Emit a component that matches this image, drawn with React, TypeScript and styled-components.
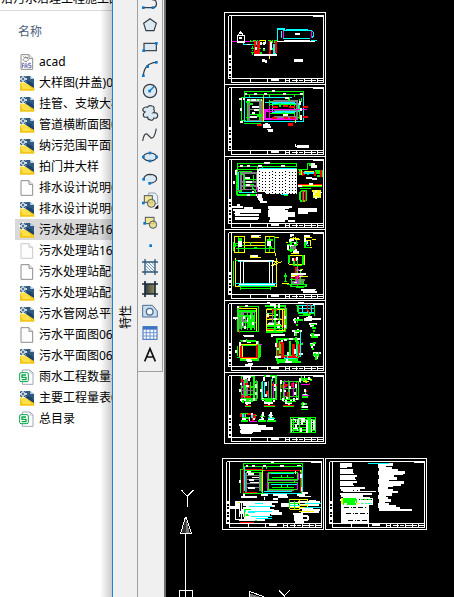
import React from "react";
import styled, { createGlobalStyle } from "styled-components";

const GlobalStyle = createGlobalStyle`
  * { box-sizing: border-box; }
  body {
    margin: 0;
    background: #000;
    font-family: "Noto Sans", "Noto Sans CJK SC", sans-serif;
    font-size: 12px;
    color: #000;
  }
`;

const Desktop = styled.div`
  display: flex;
  height: 100vh;
  overflow: hidden;
`;

const Explorer = styled.section`
  position: relative;
  flex: 0 0 112px;
  overflow: hidden;
  background: #fff;
  white-space: nowrap;
  &::after {
    content: "";
    position: absolute;
    inset: 0 0 0 auto;
    width: 12px;
    background: linear-gradient(to right, rgba(0, 0, 0, 0), rgba(0, 0, 0, 0.2));
  }
`;

const AddressBar = styled.header`
  display: flex;
  align-items: flex-end;
  height: 11px;
  padding: 0 0 3px 1px;
  line-height: 16px;
  border-bottom: 1px solid #d9d9d9;
`;

const ColumnHeader = styled.div`
  height: 40px;
  padding: 0 18px;
  line-height: 42px;
  color: #4c607a;
`;

const FileList = styled.ul`
  margin: 0;
  padding: 0 0 0 15px;
  list-style: none;
`;

const FileRow = styled.li<{ $selected?: boolean }>`
  display: flex;
  align-items: center;
  gap: 4px;
  height: 21px;
  padding-left: 4px;
  line-height: 21px;
  background: ${(p) => (p.$selected ? "#d9d9d9" : "transparent")};
`;

const FileIcon = styled.svg`
  flex: 0 0 16px;
  width: 16px;
  height: 16px;
`;

const Palette = styled.aside`
  flex: 0 0 26px;
  padding: 305px 0 0 5px;
  background: #f0f0f0;
  border-left: 1px solid #1883d7;
  border-right: 1px solid #a0a0a0;
`;

const PaletteTitle = styled.div`
  width: 16px;
  line-height: 16px;
  writing-mode: vertical-rl;
  text-orientation: sideways;
  transform: rotate(180deg);
`;

const ToolDock = styled.div`
  flex: 0 0 28px;
  background: #f0f0f0;
  border-right: 2px solid #6e6e6e;
`;

const ToolBar = styled.div`
  display: flex;
  flex-direction: column;
  width: 25px;
  margin-top: -8px;
  padding-bottom: 5px;
  border-right: 1px solid #a0a0a0;
  border-bottom: 1px solid #a0a0a0;
`;

const ToolButton = styled.button`
  display: grid;
  place-items: center;
  height: 22px;
  padding: 0;
  border: 0;
  background: transparent;
  svg {
    width: 18px;
    height: 18px;
  }
`;

const ModelSpace = styled.main`
  flex: 1;
  min-width: 0;
  background: #000;
  overflow: hidden;
  svg {
    display: block;
  }
`;

type FileKind = "fas" | "dwg" | "blank" | "faded" | "sheet";

const files: { name: string; kind: FileKind; selected?: boolean }[] = [
  { name: "acad", kind: "fas" },
  { name: "大样图(井盖)06", kind: "dwg" },
  { name: "挂管、支墩大样", kind: "dwg" },
  { name: "管道横断面图06", kind: "dwg" },
  { name: "纳污范围平面图", kind: "dwg" },
  { name: "拍门井大样", kind: "dwg" },
  { name: "排水设计说明06", kind: "blank" },
  { name: "排水设计说明06", kind: "dwg" },
  { name: "污水处理站16", kind: "dwg", selected: true },
  { name: "污水处理站16", kind: "faded" },
  { name: "污水处理站配筋", kind: "blank" },
  { name: "污水处理站配筋", kind: "dwg" },
  { name: "污水管网总平面", kind: "dwg" },
  { name: "污水平面图06", kind: "blank" },
  { name: "污水平面图06", kind: "dwg" },
  { name: "雨水工程数量表", kind: "sheet" },
  { name: "主要工程量表06", kind: "dwg" },
  { name: "总目录", kind: "sheet" },
];

function FileGlyph({ kind }: { kind: FileKind }) {
  if (kind === "dwg")
    return (
      <FileIcon viewBox="0 0 48 48">
        <path d="M20 3H33L45 12V38L28 30L16 20Z" fill="#315a82" />
        <path d="M34 3V12H45Z" fill="#c3d2e0" />
        <path d="M20 19Q36 16 45 32V42L34 34Z" fill="#1d4468" />
        <path d="M3 24L12 21L26 28L40 36L46 40V47H3Z" fill="#f3c61a" />
        <path d="M3 24L12 21L27 29L38 42H12Z" fill="#ffe04a" />
        <path d="M3 3H21V21H3Z" fill="#315a82" />
        <path d="M12 0V24M0 12H24" stroke="#fff" strokeWidth="4" />
        <path d="M4 4L20 20M20 4L4 20" stroke="#dfe8f0" strokeWidth="2" />
        <path d="M12 9V15M9 12H15" stroke="#284f74" strokeWidth="3" />
      </FileIcon>
    );
  if (kind === "sheet")
    return (
      <FileIcon viewBox="0 0 48 48">
        <path d="M10 3H33L42 12V46H10Z" fill="#fff" stroke="#a0a6b8" strokeWidth="3" />
        <path d="M33 3V12H42" fill="none" stroke="#a0a6b8" strokeWidth="2" />
        <rect x="2" y="11" width="26" height="27" rx="4" fill="#fff" stroke="#0aa54b" strokeWidth="3" />
        <path d="M21 18H9V25H21V32H8" fill="none" stroke="#0aa54b" strokeWidth="4" />
      </FileIcon>
    );
  const line = kind === "faded" ? "#c9c9c9" : "#8d8d8d";
  return (
    <FileIcon viewBox="0 0 48 48">
      <path d="M6 2H30L41 13V46H6Z" fill="#fdfdfd" stroke={line} strokeWidth="3" />
      <path d="M30 2V13H41" fill="#eee" stroke={line} strokeWidth="3" />
      {kind === "fas" && (
        <g fill="none" stroke="#5558a6" strokeWidth="2.5">
          <path d="M10 42V28H16M10 35H15M18 42V32L21 28L24 32V42M18 36H24M36 28H29V34H36V41H28" />
          <path d="M12 17L17 11H24L29 17L24 22H17ZM20 7V11M13 7L17 11M27 9L23 12" stroke="#777" />
        </g>
      )}
    </FileIcon>
  );
}

const dot = (x: number, y: number) => <rect key={x + "-" + y} x={x - 4} y={y - 4} width="8" height="8" fill="#0878d0" />;
const ink = { stroke: "#343b42", strokeWidth: 3.5, fill: "#dce9f3" };

const tools: { label: string; art: React.ReactNode }[] = [
  { label: "Polyline", art: <><path d="M8 41H38Q48 38 46 26Q44 16 34 18" {...ink} fill="none" />{dot(7, 41)}{dot(36, 41)}</> },
  { label: "Polygon", art: <path d="M27 8L46 22L39 44H15L8 22Z" {...ink} /> },
  { label: "Rectangle", art: <><rect x="9" y="16" width="37" height="22" {...ink} />{dot(8, 38)}{dot(46, 16)}</> },
  { label: "Arc", art: <><path d="M7 47Q10 9 46 7" {...ink} fill="none" />{dot(7, 47)}{dot(20, 20)}{dot(46, 7)}</> },
  { label: "Circle", art: <><circle cx="27" cy="27" r="20" {...ink} /><path d="M26 27L40 13" stroke="#0878d0" strokeWidth="4" />{dot(26, 27)}</> },
  { label: "Revision cloud", art: <path d="M12 24Q2 21 7 13Q12 7 19 10Q24 2 33 6Q42 8 38 17Q43 22 37 26Q51 25 50 36Q48 45 39 42Q35 52 26 47Q19 46 20 39Q6 42 7 32Q7 27 12 24Z" {...ink} /> },
  { label: "Spline", art: <path d="M5 45Q9 20 18 24L30 36Q40 40 46 8" {...ink} fill="none" /> },
  { label: "Ellipse", art: <><ellipse cx="27" cy="27" rx="20" ry="12" {...ink} />{dot(7, 27)}{dot(27, 15)}{dot(47, 27)}{dot(27, 39)}</> },
  { label: "Ellipse arc", art: <><path d="M8 28Q10 13 28 13Q47 14 47 27Q46 37 26 40" {...ink} />{dot(8, 28)}{dot(26, 40)}</> },
  { label: "Insert block", art: <><path d="M23 3H42L50 12V35H23Z" fill="#e8f0f6" stroke="#95a2ad" strokeWidth="3" /><rect x="10" y="11" width="24" height="20" fill="#f1e795" stroke="#4d5660" strokeWidth="3" /><circle cx="31" cy="34" r="12" fill="#e9dc7ccc" stroke="#4d5660" strokeWidth="3" /><path d="M52 38V50H40Z" />{dot(7, 33)}</> },
  { label: "Make block", art: <><rect x="13" y="10" width="26" height="19" fill="#f1e795" stroke="#4d5660" strokeWidth="3" /><circle cx="36" cy="32" r="11" fill="#e9dc7ccc" stroke="#4d5660" strokeWidth="3" />{dot(11, 28)}</> },
  { label: "Point", art: dot(29, 29) },
  { label: "Hatch", art: <><rect x="12" y="12" width="30" height="30" fill="#eef5fb" /><path d="M12 21L33 42M12 12L42 42M21 12L42 33M31 12L42 23M12 31L23 42" stroke="#456e98" strokeWidth="2" /><path d="M12 3V51M42 3V51M3 12H51M3 42H51" stroke="#315777" strokeWidth="4" /></> },
  { label: "Gradient", art: <><defs><linearGradient id="swatch"><stop stopColor="#2f3b4a" /><stop offset="1" stopColor="#948f4f" /></linearGradient></defs><rect x="12" y="12" width="30" height="30" fill="url(#swatch)" /><path d="M12 3V51M42 3V51M3 12H51M3 42H51" stroke="#1d2b3a" strokeWidth="5" /></> },
  { label: "Region", art: <><path d="M5 10H34L49 27V45H5Z" fill="#c9ddec" stroke="#4b6e95" strokeWidth="3" /><circle cx="26" cy="29" r="10" fill="#f7fafc" stroke="#4b6e95" strokeWidth="4" /></> },
  { label: "Table", art: <><rect x="6" y="8" width="42" height="38" fill="#f4f8ff" stroke="#3569b6" strokeWidth="3" /><rect x="6" y="8" width="42" height="9" fill="#3e72c4" /><path d="M16 17V46M27 17V46M38 17V46M6 26H48M6 36H48" stroke="#7096cc" strokeWidth="3" /></> },
  { label: "Text", art: <path d="M11 46L27 8L43 46M17 33H37" fill="none" stroke="#111" strokeWidth="5" /> },
];

/* Drawing colours: white, green, cyan, magenta, red, yellow, grey. */
const palette = { w: "#fff", g: "#0f0", c: "#0ff", m: "#f0f", r: "#f00", y: "#ff0", k: "#808080" };
type Ink = keyof typeof palette;
/* A stroke: colour, path, and optionally its width and dash pattern. */
type Stroke = [Ink, string, number?, string?];
const speckle = "9 3 15 3 6 6 3 3";

function Strokes({ list }: { list: Stroke[] }) {
  return (
    <>
      {list.map(([color, d, width = 3, dash], i) => (
        <path key={i} d={d} fill="none" stroke={palette[color]} strokeWidth={width} strokeDasharray={dash} />
      ))}
    </>
  );
}

/* Border, binding strip and title block of a sheet of the given height. */
const frame = (h: number): Stroke[] => {
  const head = h - 18;
  const foot = h - 6;
  return [
    ["w", `M28.5 0H331.5V${h}H28.5ZM49.5 9H325.5V${foot}H49.5ZM49.5 ${head}H325.5M40.5 9V${head}M40.5 9H49.5M40.5 ${head}H49.5`],
    ["w", "M294 10.5H325.5", 6],
    ["w", `M45 126V${head}`, 6, "9 6 3 6"],
    ["w", [106.5, 157.5, 211.5, 223.5, 244.5, 268.5, 289.5, 307.5].map((x) => `M${x} ${head}V${foot}`).join("")],
    ["w", `M168 ${head + 4.5}H192`, 6],
    ["w", `M213 ${head + 6}H325.5`, 3, "12 6 18 3"],
  ];
};

interface Sheet {
  x: number;
  y: number;
  top: number;
  height: number;
  left?: number;
  art: Stroke[];
}

const sheets: Sheet[] = [
  {
    x: 215, y: 0, top: 37.5, height: 216,
    art: [
      ["m", "M51 124H118M206 94V114M290 94V114"],
      ["w", "M68 125V105H88V125ZM71 104L77 94L84 104M72 100H83M74 96H80"],
      ["w", "M72 114H82", 6], ["w", "M66 126H90"],
      ["c", "M84 128V133H124V124M187 124V86H209V91M186 87H210M213 88H279M205 91H289M205 115H285M201 94Q197 103 201 113M293 94Q297 103 293 113M289 121H305M176 164V133H186"],
      ["c", "M205 91H290M206 115H286", 4],
      ["c", "M179 134V163", 6],
      ["w", "M187 124H300M206 120H285M96 132H106"], ["w", "M240 102H255", 6],
      ["w", "M118 164H185", 6],
      ["r", "M120 122V162M131 122V162", 8], ["r", "M118 156H135", 9], ["r", "M165 124V163", 6], ["r", "M182 124V160M128 126H134", 5],
      ["g", "M107 119V124H116M115 122H140M160 122H186M110 134H117M109 145H117M109 157H117M113 138V164M165 126H182", 4, "8 4 3 3"],
      ["g", "M137 130H155M133 145H140M144 150H152M168 147H174M134 159H142", 4, "6 4"],
      ["y", "M134 122H152M163 168V176M170 124V130", 3],
      ["w", "M138 127V135M146 126V134M151 124V132M143 145H149M168 127V150M122 141V149", 5],
      ["w", "M141 181H149M150 184H155M237 181H264", 8],
    ],
  },
  {
    x: 215, y: 80, top: 13.5, height: 216,
    art: [
      ["g", "M88 35H266V125H88ZM88 43H266M88 50V35M104 50V43M146 50V43M162 50V43M238 50V43M80 52V122M80 52H92M80 122H92M88 130H139M164 63H238V117H164ZM162 74H250M162 87H240M162 101H240M238 113H262"],
      ["c", "M88 56V124H266V52M90 52H230M150 67H240M172 69H250V94H172ZM172 96H240"],
      ["k", "M101 63H140V121H101ZM135 63V121M101 88H140M101 103H140M173 63H246V116H173M178 90H245M178 110H245", 5],
      ["g", "M98 60V122M104 60H140M104 72H115M104 104H140M92 66H104M92 112H104M126 108H140M134 88V121M164 60V120M222 50V64M260 55V65M195 70V81M207 97V108M226 70V85M254 58V118", 4],
      ["m", "M148 88H238M148 117H242M149 88V115M155 87V94H180M243 88H276M173 112V121M163 78V114", 5],
      ["y", "M145 50V125M241 119V129"],
      ["r", "M171 81H190M205 78H220M223 81H240M171 114H186M207 114H219M224 114H240M264 81H279M264 111H279M218 133H233M126 134H140", 7],
      ["w", "M171 33H183M89 42H97M117 42H126M148 42H158M203 42H212M254 42H263M77 84V93M73 57H90M74 125H84M97 59H142", 6, speckle],
      ["w", "M112 80H131M117 89H133M112 99H119M105 110H125M203 105H219M211 54H223M256 64V74M258 83V94M258 106V120", 6],
      ["w", "M145 135H165M145 141H167M155 148H173M160 153H174M149 130H158", 5],
      ["w", "M242 192V199H282M247 197H281M246 203H281", 4],
    ],
  },
  {
    x: 215, y: 150, top: 19.5, height: 219,
    art: [
      ["g", "M67 40H245V50H67ZM67 50V136H128M64 58H128M64 132H126M67 40V134M128 50V58M141 50V58M180 54H190M200 54H245M208 137H218M249 59H277V40H288M254 115H288M256 122V153"],
      ["c", "M70 66V120M73 126H122M71 119L77 130M131 56H242M197 132H218"],
      ["k", "M77 69H124V118H77ZM86 69V118M77 95H124M77 108H124", 5],
      ["g", "M66 60V134M73 64H112M76 70L89 78V88H125M86 104H117M116 74V96M88 88V117M111 110L124 128M65 123H80", 4],
      ["w", "M126 94H246", 73],
      ["w", "M90 84H106M93 95H112M93 105H104M110 126H116M95 134H104M56 93V101M64 61V74M124 134H142M126 142H142M132 150H144M136 157H155M129 148H145", 6],
      ["w", "M148 40H164M74 47H84M95 47H104M129 47H140M198 47H210", 6],
      ["m", "M128 112V138M66 122H72", 3],
      ["g", "M254 69H321M254 61V76M300 62H321V77H306M285 40V47M280 63V75", 6],
      ["r", "M249 68H262M263 63V78M300 66V79M318 59V80M258 72H270", 4],
      ["c", "M267 68H298", 8], ["y", "M270 64H296M258 60V74"],
      ["w", "M288 43H300M288 49H307M292 86H306M274 84H290", 7],
      ["r", "M249 104H321"], ["g", "M249 109H321"], ["y", "M249 107H321"], ["w", "M249 107H262M281 103H294", 6],
      ["g", "M257 123H275M256 153H274M255 125V151M274 122V152", 4], ["r", "M262 122V155M271 122V155", 4], ["k", "M266 123V151", 4],
      ["y", "M296 124H314V140H297ZM296 133H317", 7], ["w", "M304 119V129M304 138V146", 6], ["c", "M313 140V145", 5],
      ["w", "M294 131H300M318 125V130", 5],
      ["w", "M66 165H75M52 172H84M55 179H138M59 186H138M59 196H132M59 204H132M59 207H128", 6],
      ["w", "M86 174H113M56 190H75", 4],
      ["w", "M159 170H230M162 178H211M159 184H220M163 190H239M159 197H239M164 205H218M161 212H211", 7],
      ["w", "M158 174H222M160 192H240M218 213H240", 4],
      ["w", "M249 177H306M249 183H307M250 188H278", 5],
    ],
  },
  {
    x: 215, y: 225, top: 13.5, height: 213,
    art: [
      ["y", "M57 34H87V82H57ZM150 34H179V82H150ZM84 52H153M84 60H153M176 36H191M182 84V92M62 100V184H183V99M154 110H189M168 123L200 110M179 118L184 105M183 150V158"],
      ["g", "M56 50V78M150 48V80M62 70H180M54 55H76M61 60H90M70 35V82M162 35V80M105 52V60M117 67H125M61 107H76V183H180M54 107V182M76 190H167M76 186V196M166 185V196M177 34V78"],
      ["w", "M76 45V65M163 47V64", 12], ["g", "M68 43H82M157 45H174M60 56V66M164 66H172", 7],
      ["w", "M108 33H131M107 93H130M113 31H139M69 107H86M160 107H177", 5],
      ["y", "M109 38H139M106 97H138"], ["y", "M108 30V34M105 91V95"],
      ["c", "M70 109H174M60 176H185M68 181H181"], ["w", "M77 109V176M85 109V178M163 109V178M173 109V178M72 179H179", 4],
      ["w", "M83 108H161M228 28V36M225 30H237M267 32H285", 5],
      ["y", "M225 39H253M239 43H256M236 37V44M240 37V44M213 53H219M268 38H291M290 42H302M271 45V68H291M271 46H285V64M221 76H240M239 59H249M221 90H267V117H222ZM229 85H251M256 133H264"],
      ["g", "M223 52H249M221 91V115M228 45V82M239 53V63M219 75H247M217 60H225M269 47V69M270 67H286M264 90V119M237 121H261M237 100V122M211 144V171M207 169H216M207 152H216M244 45V62", 5],
      ["w", "M225 42V50M219 61V76M225 62H237M239 50V57M233 82H251M235 98V109M246 95V109M238 98V108M271 40V50M277 47V58M229 45H238M236 75H246", 6],
      ["r", "M239 62V76M243 125V180M250 151L256 162M228 154H239M231 145V166M240 99V109", 4],
      ["k", "M228 67H244M239 165H270M232 173H267", 8], ["c", "M273 49V59M275 61H283"],
      ["m", "M248 125V182M244 135H252M244 150H263M244 158H251", 4], ["g", "M248 104V126M248 129V154M229 178H273V184H227ZM224 184H265M229 160V185M257 133V178M216 178H232", 4],
      ["w", "M228 147H273M227 155H240M253 155H267M253 136H262M260 149H273M237 172H245", 4], ["y", "M228 150H246M257 153H279M200 176H221M271 154V157"],
      ["g", "M242 187H266M225 164H242M265 168V180"], ["w", "M261 195H301M263 200H306M261 191V198M263 193H303", 5],
    ],
  },
  {
    x: 215, y: 295, top: 16.5, height: 216,
    art: [
      ["y", "M67 41H124V109H67ZM154 44H208V105H154ZM72 148H127V189H75Z"],
      ["k", "M75 48V101M85 48V100M112 48V100M72 78H118M86 50H119", 6],
      ["g", "M68 35H131V110H69V35M69 48H124M80 48V105M98 48V105M108 48V105M119 48V105M73 63H120M75 83H123M78 98H119M91 64V94M102 65V96M114 67V96", 4],
      ["w", "M68 32V40M90 33H98M61 68V75M86 63V72M97 68V80M82 81V92M106 60V72M113 82V91M90 94V101M55 69H70M85 121H110M88 123H117", 5],
      ["y", "M155 60H185M155 74H202M157 89H199M183 38V46M201 39V106"],
      ["r", "M74 104V115M174 48V56M171 45H186M157 66H163M157 103H184M206 47V97M72 37H77", 4],
      ["k", "M172 48V89M163 70H199M163 84H192", 5],
      ["g", "M150 33H211V109H154M155 41H214M154 56H173M156 93H200M193 44V105M180 40V112M213 40V101M152 112H205M156 101H205", 4],
      ["w", "M155 25H164M181 25V38M166 31H182M193 28V38M159 53V65M187 56V64M176 71H187M160 86H178M192 79V88M187 96H194M211 64V73M211 90V99M174 119H189M179 121H210M172 116V125", 6],
      ["c", "M251 32H299V51H251ZM251 41H299M263 29V52M276 29V53M288 29V51"], ["g", "M242 31H250V54H298M263 57H289M251 60H284M246 29V52M299 35V63"], ["r", "M278 28V47M287 28V44M280 46V58M288 63V67"],
      ["w", "M278 65H292M266 71H317M268 75H290M274 69H287M262 32V40M250 24H267", 5],
      ["g", "M77 140H129V195H77V146M75 136H123M95 140V131M67 187H134M67 153V183M135 149V185M78 152H123", 4],
      ["r", "M78 150V188M126 149V190M81 187H126", 5], ["y", "M82 189H127M81 153V187"], ["w", "M63 165V173M74 141V152M126 137V148M83 137H94M96 142H107M94 194H107M97 198H110M89 210H112M98 207H113", 5],
      ["m", "M133 148H141M262 142V150M242 80V86M207 35V41"],
      ["g", "M185 132H246V195H185ZM195 138V176M225 139V179M250 139V190M193 183H254M186 201H258M189 197V207M242 126V141M258 147H265", 5],
      ["r", "M188 144V186M202 143V182M188 185H248M235 147V188M251 147V183M195 143H204", 7],
      ["w", "M183 145V155M180 185H198M220 170V184M246 132H256M223 133H235M200 134V140M215 192V203M211 200H231M253 178H263M206 136H217M190 159V166M240 162V178", 6],
      ["c", "M256 108V185M207 185V190H242M218 180V190M245 150V185"],
      ["w", "M233 76H262M241 70V85M248 67V78M281 86H306M287 84V96M293 88V103M231 109H262M239 112V124M244 104V117M250 103V113M284 119H314M291 116V129M298 117V124M286 148H300M291 143V158M288 151H301M300 175V187M306 177V193M293 175H317", 6],
      ["g", "M239 75H264M247 71V84M246 87V92M288 88H302M290 99H303M294 93V102M297 104V111M239 108H256M242 115V123M287 117H298M288 125H310M293 118V127M294 143H303M293 160V166M285 149H295M294 180H311M299 173V183M303 183V194M310 172V185", 5],
    ],
  },
  {
    x: 215, y: 370, top: 7.5, height: 213,
    art: [
      ["g", "M79 19H117V90H79ZM117 36H127V86H105M90 20V87M106 35V90M80 51H115M80 73H119M78 86H124M140 35V86H176M147 18H183V87H148M184 36V85M170 26V90M196 34H251V88H197ZM207 34V87M223 35V87M245 34V90M205 56H241M204 80H248M205 94H244", 4],
      ["m", "M85 34V81M176 36V88M209 30V80M236 34V80"],
      ["k", "M96 28V84M125 29V87M161 33V88M220 30V86M79 61H116", 4], ["c", "M141 34V86M147 37V82M173 23V32M256 33V40M286 25V33"],
      ["r", "M90 42H99M82 26V35M103 46V54M119 45H126M91 80H109M80 74V84M171 44H186M156 62V77M200 45V53M232 39V52M207 46H218M220 65V81M213 41V50M244 39V47", 6],
      ["w", "M88 17V30M94 20V28M90 21H109M78 38V46M93 47H103M122 43V53M122 65V74M75 57V66M82 86V96M118 84V94M106 90V99M97 94V104M89 100H107M76 89H93M102 22V33", 6],
      ["w", "M148 22V33M154 19H166M172 21H181M153 37V47M138 57V66M153 71V81M181 55V63M143 84V94M176 85V95M149 93V101M154 94H169M161 94V108M148 100H173M169 86V95M181 42V50", 6],
      ["w", "M199 31V41M199 57V66M203 84V94M212 91V101M221 94V107M214 98H231M238 84V94M244 42V54M239 67V76M211 59V67M226 48V57M216 80V88M227 90V98M247 83V91", 6],
      ["g", "M91 94H110M151 93H170M215 96H230M113 85V96M139 88H180M250 37V79M123 88V94M84 89V98", 4],
      ["r", "M90 106H108M148 106H180M204 106H238"], ["g", "M90 110H108M148 110H180M204 110H238"],
      ["g", "M254 31H270M259 19V33M262 26H285M272 30V38M283 25L290 32M271 56V75M261 74H280M257 110H278M264 96V112M259 102H277M258 118H280M262 80H280", 5],
      ["y", "M264 33H282M283 29H290M269 28L276 37"], ["m", "M259 43H282M261 77H282"], ["r", "M267 60H276M273 59V65M282 40V44"],
      ["w", "M255 25V36M268 18V25M282 22V31M269 58V67M263 73H275M262 111H280M267 98V106", 5],
      ["r", "M76 136H92M109 134H121M78 129V137M97 132H107M101 146V151M113 143V153M118 132V146M80 144H92", 7],
      ["g", "M77 130H100M88 143H105M84 134V150M120 136H126M78 153H99M129 153H153M157 153H183M136 139H150M160 143H178M139 132V145M164 138V151M172 143V150", 5],
      ["c", "M84 132V142M91 132V141M111 134V143M161 135L175 148M160 145H180M140 141V149", 4], ["m", "M102 154H125"],
      ["w", "M81 146H93M103 141V152M110 129V136M117 144V151M133 148H146M143 126V138M140 140L146 147M165 131V139M163 136H174M159 148H178M168 125V144", 5],
      ["w", "M71 164H129M74 168H154M75 173H174M77 178H173M76 182H138M76 187H113M78 190H111", 6],
      ["g", "M226 142H302V187H226ZM225 150H302M225 157H302M225 164H302M225 172H302M225 180H302M236 142V187M254 142V187M285 142V187M279 142V187", 4],
      ["w", "M230 147V186M241 148V156M249 147V165M261 145V165M267 146V157M276 149V188M290 147V186M297 149V180M233 149H240M250 146H269M233 176H250M258 173V186M248 173V184M243 163V178M287 158H300", 4],
    ],
  },
  {
    x: 215, y: 450, top: 25.5, height: 213, left: -6,
    art: [
      ["g", "M85 40H262V50H85ZM85 40V130H262V40M77 58V130M77 58H92M142 50V58M154 50V58M93 68H140V125M140 68V125M87 62H262M87 129H145M159 67H248V88H159ZM159 97H248V118H159ZM172 82H236M171 111H238M198 75V83M216 75V83M198 104V112M217 104V112M238 88V100M260 61V129"],
      ["k", "M93 68V125M93 77H137M93 88H137M93 101H137M93 113H137M135 68V123M157 69V119M156 91H248M157 121H238M157 71H235", 4],
      ["r", "M86 58V128M87 59H143M150 60H258M90 127H126M256 64V127M75 217H116"],
      ["c", "M88 52V122M142 72V128M168 71H238M168 103H245M263 51V131M148 129H256M148 123H232M229 130H258"],
      ["y", "M143 60V124M257 61V67"], ["m", "M158 70V85M158 99V113M249 70V89M248 99V119"],
      ["w", "M168 37H178M92 47H100M110 47H120M144 47H154M196 47H206M247 46H257M75 91V100M100 71H118M111 82H131M101 89H117M106 97H132M100 113H121M95 65H109M241 62V71M258 73V83M259 112V122M86 131V142M78 141H126M138 135H159M148 142V151M175 135H215M190 141H218M247 135H271M252 139H289M262 129H280M174 147H189", 5],
      ["w", "M61 156H189M84 163H171M94 168H179M84 174H164M80 181H178M71 188H183M84 196H164M86 203H160M101 209H149M44 173H75M59 164H74M167 190H201M156 184H192", 8],
      ["w", "M62 155V209H123M65 155V162M73 178V202M80 155V212M101 205H115V211H72M97 212H125", 4],
      ["c", "M119 160H143M101 170H171M100 183H172M107 199H170M122 206H171M99 187H121M90 179V187"],
      ["g", "M88 176V200M89 177H107M92 192H99M119 211H127M94 196H102"],
      ["w", "M225 158H249M222 164H250M231 172H254M197 162H221M197 168H231M249 157H314M255 166H312M256 174H294M261 179H316M281 152H302M258 185H312M235 192H263M238 198H280M236 204H265M237 210H278M240 217H267M251 188V219M278 199V211", 6],
      ["y", "M69 157H76M223 149H277V165H224M224 178H254M223 149V178M253 149V180M223 172H277V150M251 183H298"],
      ["c", "M271 161H317M270 173H317M226 166H256"], ["g", "M222 151V174M225 160H253M237 153V176"],
    ],
  },
];

const notesLeft = [35, 37, 21, 38, 38, 42, 50, 45, 49, 50, 38, 42, 75, 55, 101, 95, 66, 81, 61];
const notesRight = [44, 24, 39, 57, 81, 75, 47, 53, 32, 78, 66, 42, 29, 45, 57, 40, 23, 28, 36, 18, 33, 52, 63, 99];

function DrawingSheet({ x, y, top, height, left = 0, art }: Sheet) {
  return (
    <svg x={x - 166} y={y} width="120" height="90" viewBox="0 0 360 270" shapeRendering="crispEdges">
      <g transform={`translate(${left} ${top})`}>
        <Strokes list={frame(height)} />
      </g>
      <Strokes list={art} />
      {y === 150 && (
        <g fill="#000">
          {Array.from({ length: 96 }, (_, i) => (
            <rect key={i} x={132 + (i % 12) * 10 - ((i * 7) % 3)} y={64 + Math.floor(i / 12) * 9 + ((i * 5) % 4)} width="3" height="3" />
          ))}
          <path d="M126 126H150V133H126Z" />
        </g>
      )}
    </svg>
  );
}

function NotesSheet() {
  return (
    <svg x="49" y="450" width="220" height="90" viewBox="0 0 660 270" shapeRendering="crispEdges">
      <g transform="translate(303 25.5)">
        <Strokes list={frame(213)} />
      </g>
      {notesLeft.map((w, i) => (
        <rect key={i} x={375 + (i > 12 ? (i % 3) * 4 : 0)} y={38 + i * 6} width={w} height={i % 3 === 2 ? 5 : 7} fill="#fff" />
      ))}
      {notesRight.map((w, i) => (
        <rect key={i} x={489 + (i % 4)} y={40 + i * 6} width={w} height={i % 3 === 2 ? 5 : 7} fill="#fff" />
      ))}
      <rect x="378" y="143" width="84" height="77" fill="#fff" />
      <Strokes
        list={[
          ["w", "M462 34H482M486 35H507", 4, "7 6 4 4"],
          ["c", "M459 41H522"],
          ["w", "M377 154H474", 22],
          ["g", "M388 146H423M387 151H422M388 157H421M397 162H423", 6],
          ["g", "M437 149H472M386 143V166M424 148V158"],
          ["y", "M381 143V161", 5],
          ["y", "M426 160H472", 3, "9 4"],
          ["c", "M439 160H472", 3, "6 4"],
        ]}
      />
      <path d="M387 172H457M393 190H459M399 211H457" stroke="#000" strokeWidth="3" strokeDasharray="14 6 3 4 10 5" />
      <path d="M414 122H450M433 149H470" stroke="#000" strokeWidth="3" strokeDasharray="3 9" />
    </svg>
  );
}

function CoordinateMark() {
  return (
    <svg x="-16" y="480" width="170" height="117" viewBox="0 0 510 351" fill="none" stroke="#fff" strokeWidth="3" shapeRendering="crispEdges">
      <path d="M94 30L112 49L131 30M112 49V80M387 331L403 347L419 331M403 347V351" />
      <path d="M107 112L95 158H107Z" fill="#333" stroke="none" />
      <path d="M107 112L119 158H107Z" fill="#777" stroke="none" />
      <path d="M106 112L92 160H124L108 112M106 160V351M88 351V331H128V351M298 351V334L341 350" />
      <path d="M300 341L330 350H300Z" fill="#777" stroke="none" />
    </svg>
  );
}

export default function App() {
  return (
    <>
      <GlobalStyle />
      <Desktop>
        <Explorer>
          <AddressBar>沿污水治理工程施工图</AddressBar>
          <ColumnHeader>名称</ColumnHeader>
          <FileList>
            {files.map((file, i) => (
              <FileRow key={i} $selected={file.selected}>
                <FileGlyph kind={file.kind} />
                <span>{file.name}</span>
              </FileRow>
            ))}
          </FileList>
        </Explorer>
        <Palette>
          <PaletteTitle>特性</PaletteTitle>
        </Palette>
        <ToolDock>
          <ToolBar role="toolbar" aria-label="Draw">
            {tools.map((tool) => (
              <ToolButton key={tool.label} type="button" aria-label={tool.label}>
                <svg viewBox="0 0 54 54">{tool.art}</svg>
              </ToolButton>
            ))}
          </ToolBar>
        </ToolDock>
        <ModelSpace>
          <svg width="100%" height="100%" role="img" aria-label="Model space">
            {sheets.map((sheet) => (
              <DrawingSheet key={sheet.y} {...sheet} />
            ))}
            <NotesSheet />
            <CoordinateMark />
          </svg>
        </ModelSpace>
      </Desktop>
    </>
  );
}
